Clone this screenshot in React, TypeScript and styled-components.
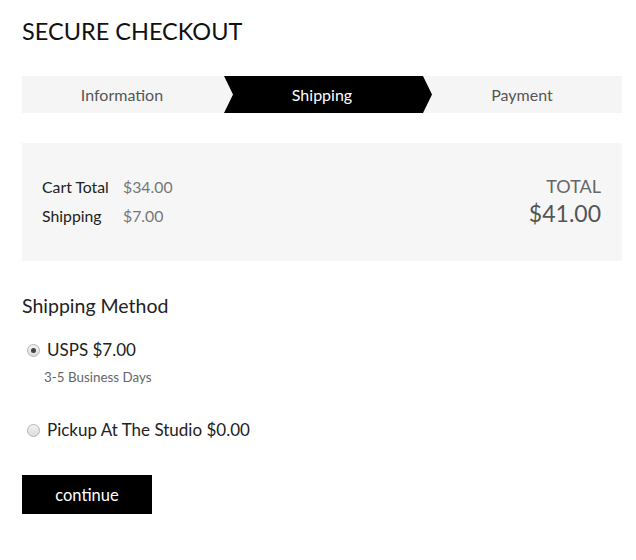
import * as React from "react";
import styled, { createGlobalStyle } from "styled-components";

const GlobalStyle = createGlobalStyle`
  html, body {
    margin: 0;
    padding: 0;
    background: #fff;
    font-family: Lato, "Open Sans", "Liberation Sans", sans-serif;
  }
`;

const Page = styled.div`
  width: 600px;
  padding: 16px 22px 40px;
`;

const Title = styled.h1`
  margin: 0;
  font-size: 23.5px;
  font-weight: 400;
  line-height: 30px;
  color: #111;
`;

const Steps = styled.div`
  margin-top: 30px;
  height: 37px;
  display: grid;
  grid-template-columns: repeat(3, 1fr);
  background: #f5f5f5;
`;

const Step = styled.div<{ $active?: boolean }>`
  position: relative;
  display: flex;
  align-items: center;
  justify-content: center;
  font-size: 16px;
  color: ${p => (p.$active ? "#fff" : "#555")};
  z-index: ${p => (p.$active ? 1 : 0)};

  &::before {
    content: "";
    display: ${p => (p.$active ? "block" : "none")};
    position: absolute;
    top: 0;
    bottom: 0;
    left: 2px;
    right: -10px;
    background: #000;
    clip-path: polygon(0 0, 199px 0, 100% 50%, 199px 100%, 0 100%, 9px 50%);
    z-index: -1;
  }
`;

const Summary = styled.div`
  margin-top: 30px;
  height: 118px;
  background: #f6f6f6;
  display: flex;
  align-items: center;
  justify-content: space-between;
  padding: 0 21px 0 20px;
`;

const Lines = styled.div`
  display: grid;
  grid-template-columns: 81px auto;
  row-gap: 6px;
  font-size: 15.8px;
  line-height: 23px;
  margin-top: -2px;
`;

const Label = styled.span`
  color: #222;
`;

const Value = styled.span`
  color: #777;
`;

const TotalBlock = styled.div`
  text-align: right;
  color: #666;
`;

const TotalLabel = styled.div`
  font-size: 18px;
  line-height: 22px;
`;

const TotalAmount = styled.div`
  font-size: 23px;
  line-height: 32px;
  color: #555;
`;

const SectionTitle = styled.h2`
  margin: 32px 0 0;
  font-size: 19.5px;
  font-weight: 400;
  line-height: 26px;
  color: #222;
`;

const Options = styled.div`
  margin-top: 20px;
  display: flex;
  flex-direction: column;
  gap: 33px;
`;

const Option = styled.label`
  display: flex;
  flex-direction: column;
`;

const OptionRow = styled.div`
  display: flex;
  align-items: center;
  gap: 7px;
  padding-left: 5px;
  font-size: 17px;
  line-height: 22px;
  color: #222;
`;

const Radio = styled.span<{ $checked?: boolean }>`
  width: 11px;
  height: 11px;
  border-radius: 50%;
  border: 1px solid #b5b5b5;
  background: linear-gradient(#f2f2f2, #dcdcdc);
  display: flex;
  align-items: center;
  justify-content: center;

  &::after {
    content: "";
    display: ${p => (p.$checked ? "block" : "none")};
    width: 5px;
    height: 5px;
    border-radius: 50%;
    background: #444;
  }
`;

const OptionNote = styled.div`
  margin: 7px 0 0 22px;
  font-size: 13.4px;
  line-height: 18px;
  color: #666;
`;

const ContinueButton = styled.button`
  margin-top: 34px;
  width: 130px;
  height: 39px;
  border: none;
  background: #000;
  color: #fff;
  font-family: inherit;
  font-size: 16.5px;
  cursor: pointer;
`;

const App: React.FC = () => {
  return (
    <>
      <GlobalStyle />
      <Page>
        <Title>SECURE CHECKOUT</Title>
        <Steps>
          <Step>Information</Step>
          <Step $active>Shipping</Step>
          <Step>Payment</Step>
        </Steps>
        <Summary>
          <Lines>
            <Label>Cart Total</Label>
            <Value>$34.00</Value>
            <Label>Shipping</Label>
            <Value>$7.00</Value>
          </Lines>
          <TotalBlock>
            <TotalLabel>TOTAL</TotalLabel>
            <TotalAmount>$41.00</TotalAmount>
          </TotalBlock>
        </Summary>
        <SectionTitle>Shipping Method</SectionTitle>
        <Options>
          <Option>
            <OptionRow>
              <Radio $checked />
              USPS $7.00
            </OptionRow>
            <OptionNote>3-5 Business Days</OptionNote>
          </Option>
          <Option>
            <OptionRow>
              <Radio />
              Pickup At The Studio $0.00
            </OptionRow>
          </Option>
        </Options>
        <ContinueButton>continue</ContinueButton>
      </Page>
    </>
  );
};

export default App;
